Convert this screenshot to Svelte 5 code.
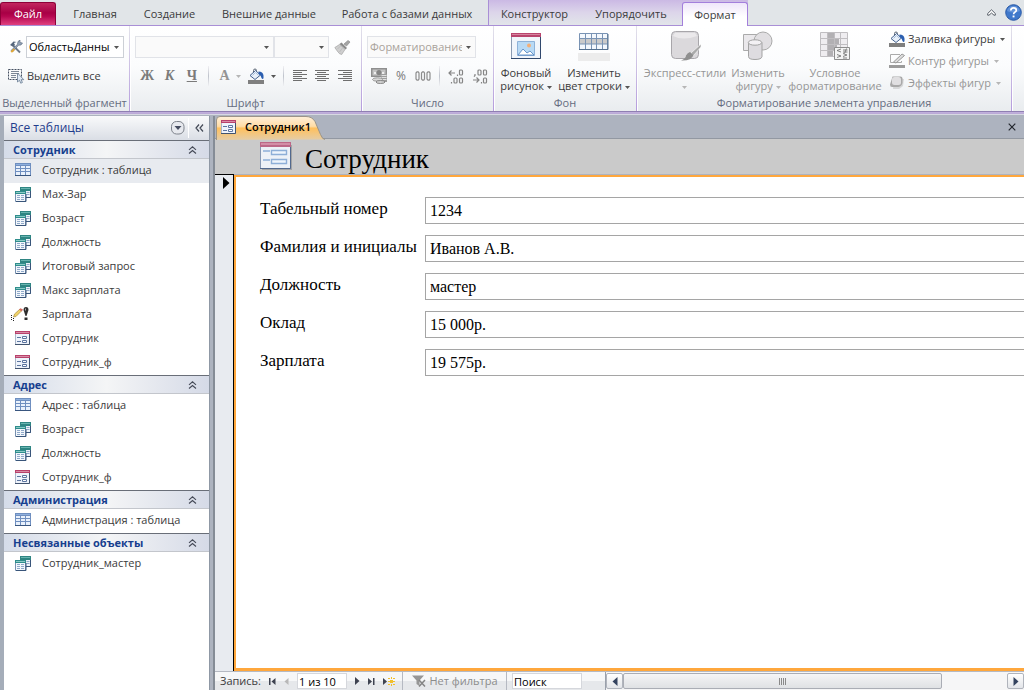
<script>
  const tabs = [
    { label: 'Главная', width: 70 },
    { label: 'Создание', width: 79 },
    { label: 'Внешние данные', width: 120 },
    { label: 'Работа с базами данных', width: 156 }
  ];
  const contextTabs = [
    { label: 'Конструктор', width: 91 },
    { label: 'Упорядочить', width: 102 },
    { label: 'Формат', width: 66, active: true }
  ];
  const navGroups = [
    {
      title: 'Сотрудник',
      items: [
        { icon: 'table', label: 'Сотрудник : таблица', selected: true },
        { icon: 'query', label: 'Мах-Зар' },
        { icon: 'query', label: 'Возраст' },
        { icon: 'query', label: 'Должность' },
        { icon: 'query', label: 'Итоговый запрос' },
        { icon: 'query', label: 'Макс зарплата' },
        { icon: 'update', label: 'Зарплата' },
        { icon: 'form', label: 'Сотрудник' },
        { icon: 'form', label: 'Сотрудник_ф' }
      ]
    },
    {
      title: 'Адрес',
      items: [
        { icon: 'table', label: 'Адрес : таблица' },
        { icon: 'query', label: 'Возраст' },
        { icon: 'query', label: 'Должность' },
        { icon: 'form', label: 'Сотрудник_ф' }
      ]
    },
    { title: 'Администрация', items: [{ icon: 'table', label: 'Администрация : таблица' }] },
    { title: 'Несвязанные объекты', items: [{ icon: 'query', label: 'Сотрудник_мастер' }] }
  ];
  const fields = [
    { id: 'number', label: 'Табельный номер', value: '1234' },
    { id: 'name', label: 'Фамилия и инициалы', value: 'Иванов А.В.' },
    { id: 'post', label: 'Должность', value: 'мастер' },
    { id: 'rate', label: 'Оклад', value: '15 000р.' },
    { id: 'salary', label: 'Зарплата', value: '19 575р.' }
  ];
  const aligns = [
    { name: 'По левому краю', x: [0, 0, 0] },
    { name: 'По центру', x: [2, 2, 2] },
    { name: 'По правому краю', x: [5, 5, 5] }
  ];
</script>

{#snippet arrow()}
  <svg class="arrow" width="5" height="3" viewBox="0 0 5 3" aria-hidden="true"><path d="M0 0h5L2.500 3z" fill="currentColor" /></svg>
{/snippet}

{#snippet bucket()}
  <svg width="17" height="16" viewBox="0 0 17 16" aria-hidden="true">
    <path d="M5.500 5V2.500q0-1.500 1.500-1.500t1.500 1.500V7" fill="none" stroke="#5b6675" />
    <path d="M2 7.500L7.500 2.500l5 4.500L7 11.500z" fill="#e8f0fa" stroke="#45628f" />
    <path d="M4.500 7.500l3-3 3 2.800" fill="none" stroke="#a9c0dd" />
    <path d="M10.500 3.500q4.500 0 5 4v2.800q-1 1.500-2-.3-.5-3-3-4z" fill="#2c5fb0" />
    <path d="M0 12h16v4H0z" fill="#7f7f7f" />
  </svg>
{/snippet}

{#snippet navIcon(kind)}
  {#if kind === 'table'}
    <svg width="16" height="14" viewBox="0 0 16 14" aria-hidden="true">
      <path d="M0 0h16v13H0z" fill="#6f8fc0" /><path d="M0 12h16v1H0z" fill="#39567f" />
      <path d="M1 1h14v1H1z" fill="#8fb0de" />
      <path d="M1 3h4v2H1zM6 3h4v2H6zM11 3h4v2h-4zM1 6h4v2H1zM6 6h4v2H6zM11 6h4v2h-4zM1 9h4v3H1zM6 9h4v3H6zM11 9h4v3h-4z" fill="#e9f1fc" />
    </svg>
  {:else if kind === 'query'}
    <svg width="16" height="15" viewBox="0 0 16 15" aria-hidden="true">
      <path d="M5.500.5h10v10h-10z" fill="#eef4fa" stroke="#4d6c93" /><path d="M5 0h11v4H5z" fill="#2f8583" /><path d="M6 1h9v1H6z" fill="#68b5b0" />
      <path d="M11.500 5.500h3m-3 2h3" stroke="#8fa9c9" />
      <path d="M.5 4.500h10v10H.5z" fill="#f3f7fc" stroke="#7790af" /><path d="M0 4h11v3H0z" fill="#2f8d8c" /><path d="M1 5h9v1H1z" fill="#8bcac5" />
      <path d="M2 8.500h3m1 0h3m-7 2h3m1 0h3m-7 2h3m1 0h3" stroke="#8fa9c9" /><path d="M1 14.500h10V7m0 3.500h4.500V4" fill="none" stroke="#39557a" />
    </svg>
  {:else if kind === 'update'}
    <svg class="wide" width="20" height="14" viewBox="0 0 20 14" aria-hidden="true">
      <path d="M0 8h1v1H0zm0 2h1v1H0zm0 2h1v1H0zm2-1h1v1H2zm0 2h1v1H2z" fill="#222" />
      <path d="M2.500 10l1-3L9 2l2 1.500L5 9.500z" fill="#f0d268" stroke="#9a8138" stroke-width=".6" />
      <path d="M8 2.500l1.500-1.300L12 2.500 10.500 4.500z" fill="#d56b61" />
      <path d="M12.500 3q0-3 2.500-3t2.500 3l-2 6h-1z" fill="#2d2d2d" /><path d="M14 1.500h1v2h-1z" fill="#aaa" /><path d="M13.500 10.500h3v2.500h-3z" fill="#2d2d2d" />
    </svg>
  {:else}
    <svg width="16" height="15" viewBox="0 0 16 15" aria-hidden="true">
      <path d="M.5.5h14v13H.5z" fill="#eef3fb" stroke="#a8b3c6" />
      <path d="M0 0h15v3H0z" fill="#b8416b" /><path d="M1 1h13v1H1z" fill="#d88ba6" />
      <path d="M0 13.500h14.500V3" fill="none" stroke="#41536f" />
      <path d="M2 6.500h4m-4 4h4" stroke="#5c75a0" /><path d="M7.500 5.500h4v2h-4zm0 4h4v2h-4z" fill="#fff" stroke="#5c75a0" />
    </svg>
  {/if}
{/snippet}

<div class="app">
  <nav class="tabs" aria-label="Лента">
    <button class="file">Файл</button>
    <div class="main-tabs">
      {#each tabs as tab}<button style="width: {tab.width}px">{tab.label}</button>{/each}
    </div>
    <div class="context">
      {#each contextTabs as tab}<button class:active={tab.active} style="width: {tab.width}px">{tab.label}</button>{/each}
    </div>
    <div class="tools">
      <button aria-label="Свернуть ленту"><svg width="9" height="7" viewBox="0 0 9 7"><path d="M.7 4.500L4.500.8l3.800 3.700v1.700H7L4.500 4 2 6.200H.7z" fill="#fff" stroke="#555c66" /></svg></button>
      <button aria-label="Справка"><svg width="17" height="17" viewBox="0 0 17 17"><circle cx="8.500" cy="8.500" r="7.800" fill="#3f78cb" stroke="#2c5ba6" /><path d="M2 7a6.700 6.500 0 0 1 13 0q-6 3-13 0z" fill="#7ba5e3" opacity=".6" /><path d="M5.800 6.500q0-2.700 2.800-2.700 2.700 0 2.700 2.400 0 1.300-1.500 2.100-1.200.7-1.200 2" fill="none" stroke="#fff" stroke-width="1.700" /><path d="M7.600 11.500h1.900v1.900H7.600z" fill="#fff" /></svg></button>
    </div>
  </nav>

  <div class="ribbon">
    <section class="group g-select">
      <div class="group-body">
        <div class="line">
          <svg width="14" height="14" viewBox="0 0 14 14" aria-hidden="true"><path d="M3 4.500l8 8" stroke="#6d7989" stroke-width="1.800" /><path d="M1 5l3.500-3.500 3 .5L5 3l1 2-2 1.500z" fill="#56677e" /><path d="M9 1.500L11 0v2.500l2.500.5-1.500 2-2.500.2L3.500 12 2 10.500 8.500 4.300z" fill="#96a5b8" stroke="#53637a" stroke-width=".6" /><path d="M1.500 11.500l3-3 1.500 1.300-3 3z" fill="#e4aa35" /></svg>
          <select class="object" aria-label="Объект"><option>ОбластьДанных</option></select>
        </div>
        <button class="line select-all">
          <svg width="17" height="16" viewBox="0 0 17 16" aria-hidden="true"><path d="M.5 1.500h13v10H.5z" fill="none" stroke="#444f60" stroke-dasharray="2 1" /><path d="M3 3.500h8m-8 2h8m-8 2h5m-5 2h5" stroke="#7c8796" /><path d="M9.500 5v9l2-1.800 1.200 3 1.700-.7-1.200-2.800h2.600z" fill="#dfe9f5" stroke="#66788f" stroke-width=".8" /></svg>
          Выделить все
        </button>
      </div>
      <h2>Выделенный фрагмент</h2>
    </section>

    <section class="group g-font">
      <div class="group-body">
        <div class="line">
          <select class="font-name" aria-label="Шрифт" disabled><option></option></select>
          <select class="font-size" aria-label="Размер шрифта" disabled><option></option></select>
          <button class="painter" aria-label="Формат по образцу" disabled><svg width="17" height="15" viewBox="0 0 17 15"><path d="M10 4L14 .5l2 1.500-3.500 4z" fill="#a5a5a5" stroke="#8c8c8c" stroke-width=".7" /><path d="M7.500 2.500l5.500 5.500-1.500 1.500L5.500 4z" fill="#8a8a8a" /><path d="M5.500 4.500l5.500 5-3.300 5-2.200-.8Q3 11 .8 7.500z" fill="#cfcfcf" stroke="#9a9a9a" stroke-width=".6" /><path d="M3.500 9l3-3m-1 6L8.500 8" stroke="#bdbdbd" /></svg></button>
        </div>
        <div class="line format">
          <button class="letter" aria-label="Полужирный">Ж</button>
          <button class="letter" aria-label="Курсив"><i>К</i></button>
          <button class="letter" aria-label="Подчеркнутый"><u>Ч</u></button>
          <span class="sep"></span>
          <button class="letter with-arrow faint" aria-label="Цвет текста">А{@render arrow()}</button>
          <button class="with-arrow" aria-label="Цвет фона">{@render bucket()}{@render arrow()}</button>
          <span class="sep"></span>
          {#each aligns as a}
            <button class="align" aria-label={a.name}><svg width="14" height="12" viewBox="0 0 14 12"><path d="M0 .5h14M0 4.500h14M0 8.500h14" stroke="#6f6f6f" /><path d="M{a.x[0]} 2.500h9M{a.x[1]} 6.500h9M{a.x[2]} 10.500h9" stroke="#6f6f6f" /></svg></button>
          {/each}
        </div>
      </div>
      <h2>Шрифт</h2>
    </section>

    <section class="group g-number">
      <div class="group-body">
        <div class="line"><select class="number-format" aria-label="Формат числа" disabled><option>Форматирование</option></select></div>
        <div class="line numbers">
          <button aria-label="Денежный формат" disabled><svg width="16" height="16" viewBox="0 0 16 16"><path d="M0 0h16v9H0z" fill="#8f8f8f" /><path d="M1.500 1.500h13v6h-13z" fill="#c4c4c4" /><path d="M3 4h2v2H3zm8 0h2v2h-2z" fill="#eee" /><circle cx="8" cy="4.500" r="2.600" fill="#858585" /><path d="M10 6h6v8h-6z" fill="#9d9d9d" /><path d="M10.500 7.500h5m-5 2h5m-5 2h5" stroke="#e0e0e0" /><ellipse cx="6.500" cy="11.500" rx="5" ry="1.700" fill="#d9d9d9" stroke="#999" /><ellipse cx="9.500" cy="14" rx="4.500" ry="1.500" fill="#d0d0d0" stroke="#888" /></svg></button>
          <button class="percent" aria-label="Процентный формат" disabled>%</button>
          <button class="zeros" aria-label="Формат с разделителями" disabled><svg width="16" height="10" viewBox="0 0 16 10"><path d="M1 2l1-1.200h1.200L4 2v6L3.200 9.200H2L1 8zM6.500 2l1-1.200h1.200L9.500 2v6l-.8 1.200H7.500L6.500 8zM12 2l1-1.200h1.200L15 2v6l-.8 1.200H13L12 8z" fill="none" stroke="#8d8d8d" stroke-width="1.200" /></svg></button>
          <span class="sep"></span>
          {#each [0, 1] as n}
            <button aria-label={n ? 'Уменьшить разрядность' : 'Увеличить разрядность'} disabled><svg width="16" height="15" viewBox="0 0 16 15"><g fill="none" stroke="#858585" stroke-width="1.200">
              {#if n}<path d="M3 5v1.500l-1 1.200" /><rect x="6" y="1" width="3" height="5" rx="1" /><rect x="11.500" y="1" width="3" height="5" rx="1" /><path d="M1 11h6M4.500 8.500L7 11l-2.500 2.500M9.500 13v1.500" /><rect x="11.500" y="9" width="3" height="5" rx="1" />
              {:else}<path d="M7 4H1m2.500-2.500L1 4l2.500 2.500M9.500 5.500v1.500" /><rect x="11.500" y="1" width="3" height="5" rx="1" /><path d="M3.500 13v1.500" /><rect x="6" y="9" width="3" height="5" rx="1" /><rect x="11.500" y="9" width="3" height="5" rx="1" />{/if}
            </g></svg></button>
          {/each}
        </div>
      </div>
      <h2>Число</h2>
    </section>

    <section class="group g-back">
      <div class="group-body bigs">
        <button class="big">
          <svg width="32" height="30" viewBox="0 0 32 30" aria-hidden="true"><path d="M1.500 2.500h29v25h-29z" fill="#f1f5fb" stroke="#8b9bb3" /><path d="M1 2h30v4H1z" fill="#b8446d" /><path d="M2 3h28v1H2z" fill="#d5849f" /><path d="M1 27.500h29.500V6" fill="none" stroke="#30486d" /><path d="M7.500 10.500h17v14h-17z" fill="#b9daf5" stroke="#8eb2d9" /><circle cx="19" cy="14.500" r="2" fill="#f4af77" /><path d="M8 24l5-6 4 4 3-2 4 4z" fill="#fff" stroke="#5b8bc4" stroke-width=".9" /></svg>
          <span>Фоновый<br />рисунок {@render arrow()}</span>
        </button>
        <button class="big">
          <svg width="32" height="30" viewBox="0 0 32 30" aria-hidden="true"><path d="M1.500 2.500h28v16h-28z" fill="#f4f8fd" /><path d="M2 8h28v5H2z" fill="#cacaca" /><path d="M1.500 2.500h28v16h-28zM7.500 3v15m6-15v15m5-15v15m6-15v15M2 7.500h28M2 13h28" fill="none" stroke="#7993b4" /><path d="M1 18.500h29V3" fill="none" stroke="#54708f" /><path d="M0 22h32v8H0z" fill="#ececec" /></svg>
          <span>Изменить<br />цвет строки {@render arrow()}</span>
        </button>
      </div>
      <h2>Фон</h2>
    </section>

    <section class="group g-control">
      <div class="group-body bigs">
        <button class="big styles" disabled>
          <svg width="32" height="30" viewBox="0 0 32 30" aria-hidden="true"><rect x="2.500" y=".5" width="27" height="27" rx="4" fill="#dbd9dc" stroke="#a8a6aa" /><path d="M4 5q10 5 24 0l-2-3H6z" fill="#ebe9eb" /><path d="M32 13l-10 9 2 3 8-9z" fill="#aaa" stroke="#fff" stroke-width=".6" /><path d="M21 21l3.500 3q-2 6-12.500 5.500 5-2 5-5 1.500-3 4-3.500z" fill="#8f8f8f" /></svg>
          <span>Экспресс-стили<br />{@render arrow()}</span>
        </button>
        <button class="big shape" disabled>
          <svg width="32" height="30" viewBox="0 0 32 30" aria-hidden="true"><path d="M1.500 3.500h17v16h-17z" fill="#eae8eb" stroke="#aaa" /><circle cx="21" cy="10" r="9" fill="#e1dfe2" stroke="#aaa" /><path d="M6.500 11.500v14q0 3 6.500 3t7-3v-14z" fill="#dedce0" stroke="#a3a3a3" /><ellipse cx="13" cy="11.500" rx="6.700" ry="2.700" fill="#f3f1f4" stroke="#a3a3a3" /></svg>
          <span>Изменить<br />фигуру {@render arrow()}</span>
        </button>
        <button class="big cond" disabled>
          <svg width="32" height="30" viewBox="0 0 32 30" aria-hidden="true"><path d="M1.500 1.500h27v24h-27z" fill="#efedf0" /><path d="M8 1h7v6h5v6h-2v6h-4v6H8z" fill="#b2b0b3" /><path d="M1.500 1.500h27v24h-27zM8.500 1v24m7-24v24m6-24v24M1 7.500h27M1 13.500h27M1 19.500h27" fill="none" stroke="#c0bec1" /><path d="M15.500 16.500h15v12h-15z" fill="#f4f4f4" stroke="#8d8d8d" /><path d="M22 18l-4 1.500 4 1.500m2-2h4.500m-4.500 2h4.500m-1-3.500l-2 5M18 23.500l4 1.500-4 1.500m6-4l4 1.500-4 1.500m0 1.500h4" fill="none" stroke="#777" stroke-width=".9" /></svg>
          <span>Условное<br />форматирование</span>
        </button>
        <div class="shape-list">
          <button>{@render bucket()}<span>Заливка фигуры</span>{@render arrow()}</button>
          <button disabled><svg width="17" height="16" viewBox="0 0 17 16" aria-hidden="true"><path d="M11 1.500H1.500v8h11V8" fill="none" stroke="#aaa" /><path d="M4.500 9L13 1l2.500 1.500L7 10z" fill="#ddd" stroke="#999" /><path d="M0 12h16v3H0z" fill="#9b9b9b" /></svg><span>Контур фигуры</span>{@render arrow()}</button>
          <button disabled><svg width="17" height="16" viewBox="0 0 17 16" aria-hidden="true"><path d="M5 4h10l-1 7-4 3H4z" fill="#bbb" opacity=".5" /><path d="M3.500 1.500h8q2 0 2 2V8q-1 3.500-4 4H3Q1 12 1 9.500z" fill="#a9a9a9" /><rect x="3" y="2" width="9" height="8" rx="2.500" fill="#e0dfe1" /></svg><span>Эффекты фигур</span>{@render arrow()}</button>
        </div>
      </div>
      <h2>Форматирование элемента управления</h2>
    </section>
  </div>

  <div class="workspace">
    <aside>
      <header>
        <h1>Все таблицы</h1>
        <button class="round" aria-label="Выбор категории"><svg width="14" height="14" viewBox="0 0 14 14"><rect x=".5" y=".5" width="12.500" height="12.500" rx="5" fill="#e7e9ee" stroke="#7d828b" /><path d="M3.500 5h7L7 9z" fill="#454c60" /></svg></button>
        <button class="collapse" aria-label="Свернуть область"><svg width="9" height="8" viewBox="0 0 9 8"><path d="M4 .5L1 4l3 3.500M8 .5L5 4l3 3.500" fill="none" stroke="#434956" stroke-width="1.200" /></svg></button>
      </header>
      {#each navGroups as group}
        <section>
          <button class="nav-title">{group.title}<svg width="9" height="8" viewBox="0 0 9 8" aria-hidden="true"><path d="M1 3.800L4.500.8 8 3.800M1 7.500l3.500-3L8 7.500" fill="none" stroke="#454a57" stroke-width="1.100" /></svg></button>
          {#each group.items as item}
            <button class="nav-item" class:selected={item.selected}><span class="nav-icon">{@render navIcon(item.icon)}</span>{item.label}</button>
          {/each}
        </section>
      {/each}
    </aside>

    <main>
      <div class="doc-tabs">
        <button class="doc-tab">
          <svg class="tab-shape" width="109" height="24" viewBox="0 0 109 24" aria-hidden="true"><defs><linearGradient id="tabFill" x2="0" y2="1"><stop stop-color="#fff0d9" /><stop offset=".42" stop-color="#ffdca6" /><stop offset=".5" stop-color="#ffc05d" /><stop offset="1" stop-color="#e5cda6" /></linearGradient></defs><path d="M.5 24V4Q.5.5 4 .5h86q6 0 9 5l5.500 13q2 5 4.500 5" fill="url(#tabFill)" stroke="#9b9488" /></svg>
          <span>{@render navIcon('form')}Сотрудник1</span>
        </button>
        <button class="close" aria-label="Закрыть"><svg width="8" height="8" viewBox="0 0 8 8"><path d="M.7.7l6.600 6.600m0-6.600L.7 7.300" stroke="#23272e" stroke-width="1.200" /></svg></button>
      </div>
      <div class="form-head">
        <svg width="33" height="29" viewBox="0 0 33 29" aria-hidden="true"><path d="M2 3h30v25H2z" fill="#8b8b8b" opacity=".6" /><path d="M.5.5h30v26H.5z" fill="#edf1f7" stroke="#8798b2" /><path d="M0 0h31v5H0z" fill="#bd6787" /><path d="M1 1h29v2H1z" fill="#d28ea6" /><path d="M0 26.500h30.500V5" fill="none" stroke="#52698e" /><path d="M3 9h7m-7 9h7" stroke="#a5bfe0" stroke-width="2" /><path d="M11.500 8.500h15v4h-15zm0 9h15v4h-15z" fill="#eef4fc" stroke="#8daed7" stroke-width="1.400" /></svg>
        <h1>Сотрудник</h1>
      </div>
      <div class="record">
        <div class="selector"><svg width="7" height="12" viewBox="0 0 7 12" aria-hidden="true"><path d="M0 0l6.500 6L0 12z" /></svg></div>
        <form>
          {#each fields as f}
            <label for={f.id}>{f.label}</label>
            <input id={f.id} value={f.value} />
          {/each}
        </form>
      </div>
      <footer>
        <div class="records">
          <label for="record">Запись:</label>
          <button aria-label="Первая запись"><svg width="7" height="7" viewBox="0 0 7 7"><path d="M0 0h1.500v7H0zM6.500 0v7L2.500 3.500z" /></svg></button>
          <button class="prev" aria-label="Предыдущая запись" disabled><svg width="5" height="7" viewBox="0 0 5 7"><path d="M4.500 0v7L.5 3.500z" /></svg></button>
          <input id="record" value="1 из 10" />
          <button aria-label="Следующая запись"><svg width="5" height="8" viewBox="0 0 5 8"><path d="M0 0v8l4.500-4z" /></svg></button>
          <button class="last" aria-label="Последняя запись"><svg width="7" height="7" viewBox="0 0 7 7"><path d="M5 0h1.500v7H5zM0 0v7l4-3.500z" /></svg></button>
          <button aria-label="Новая запись"><svg width="13" height="9" viewBox="0 0 13 9"><path d="M0 1v7l4-3.500z" /><path d="M5 1h2v1H5zm3-1h1v2H8zm2 1h2v1h-2zM5 4h2v1H5zm5 0h2v1h-2zM5 7h2v1H5zm3 0h1v2H8zm2 0h2v1h-2zM7 3h3v3H7z" fill="#f1bf2c" /></svg></button>
        </div>
        <button class="filter" disabled><svg width="14" height="12" viewBox="0 0 14 12" aria-hidden="true"><path d="M0 .5h12L7.500 5.500V11l-3-2V5.500z" fill="#969696" /><path d="M7 5l6 6.500m0-6.500l-6 6.500" stroke="#858585" stroke-width="1.500" /></svg>Нет фильтра</button>
        <div class="search"><input aria-label="Поиск" value="Поиск" /></div>
        <div class="scroll">
          <button aria-label="Влево"><svg width="6" height="9" viewBox="0 0 6 9"><path d="M5.500 0v9L.5 4.500z" fill="#34435f" /></svg></button>
          <div class="track"><div class="thumb"><i></i><i></i><i></i><i></i></div></div>
          <button aria-label="Вправо"><svg width="6" height="9" viewBox="0 0 6 9"><path d="M.5 0v9l5-4.500z" fill="#34435f" /></svg></button>
        </div>
      </footer>
    </main>
  </div>
</div>

<style>
  :global(body) { margin: 0; }
  .app { display: flex; flex-direction: column; min-height: 100vh; overflow: hidden; background: #adb3bf; color: #3b3b3b; font: 11px/14px "Open Sans", "Noto Sans", sans-serif; }
  .app * { box-sizing: border-box; }
  button, input, select { font: inherit; color: inherit; margin: 0; }
  button { display: flex; align-items: center; justify-content: center; padding: 0; border: 0; background: none; white-space: nowrap; }
  h1, h2 { margin: 0; font-weight: normal; }
  svg { display: block; flex: none; }

  .tabs { display: flex; height: 26px; background: #e1e5e8; border-bottom: 1px solid #a98fd6; }
  .file { width: 56px; margin-top: 2px; border: 1px solid #8d0038; border-bottom: 0; border-radius: 3px 3px 0 0; color: #fff; background: linear-gradient(#c1265e, #a80045 45%, #b5064f 60%, #e0407e); }
  .main-tabs { display: flex; padding: 2px 3px 0 4px; }
  .context { display: flex; height: 26px; border-left: 1px solid #a98fd6; background: linear-gradient(#cbb9e4, #dcd5ea 50%, #e2e5e9); border-bottom: 1px solid #a98fd6; }
  .context button { height: 24px; margin-top: 2px; }
  .context .active { border: 1px solid #a37fdc; border-bottom: 0; border-radius: 3px 3px 0 0; background: linear-gradient(#efe6fa, #fff 60%); }
  .tools { display: flex; flex: 1; align-items: center; justify-content: flex-end; gap: 9px; padding-right: 2px; }

  .ribbon { display: flex; height: 89px; background: linear-gradient(#fff, #fbfcfd 45%, #e9ecef 85px, #8f7fb2 85px, #8f7fb2 86px, #c2b0dd 86px, #b9a8d5 88px, #d7d9e2 88px); padding-bottom: 4px; }
  .group { display: flex; flex-direction: column; flex: none; border-right: 1px solid; border-image: linear-gradient(#e3e3ea, #b49bdd) 1; box-shadow: 1px 0 #fff; }
  .group h2 { height: 16px; font-size: 11px; line-height: 15px; text-align: center; color: #656c80; white-space: nowrap; }
  .group-body { flex: 1; display: flex; flex-direction: column; gap: 7px; padding: 10px 5px 0; }
  .line { display: flex; align-items: center; height: 22px; }
  .g-select { width: 130px; }
  .g-font { width: 232px; }
  .g-number { width: 132px; }
  .g-back { width: 143px; }
  .g-control { width: 375px; }
  select { appearance: none; height: 22px; padding: 0 13px 0 2px; border: 1px solid #ccd0d6; border-radius: 0; overflow: hidden; background: #fff url("data:image/svg+xml,%3Csvg xmlns='http://www.w3.org/2000/svg' width='5' height='3'%3E%3Cpath d='M0 0h5L2.500 3z' fill='%23555'/%3E%3C/svg%3E") no-repeat right 4px center; color: #000; }
  select:disabled { opacity: 1; background-color: #fafafa; border-color: #e1e3e8; color: #a9a29a; }
  .g-select .line { gap: 3px; padding-left: 4px; }
  .object { width: 98px; }
  .group .select-all { justify-content: flex-start; gap: 2px; padding-left: 3px; }
  .font-name { width: 139px; }
  .font-size { width: 55px; }
  .painter { padding-left: 5px; }
  .letter { width: 23px; font: bold 14px/18px "Liberation Serif", serif; color: #7b7b7b; }
  .format { padding-left: 1px; }
  .sep { width: 1px; height: 20px; margin: 0 5px; background: linear-gradient(#f0f0f3, #bfc3cc, #f0f0f3); }
  .with-arrow { width: 33px; gap: 6px; }
  .faint { color: #949494; }
  .faint .arrow { color: #b5b5b5; }
  .align { width: 23px; }
  .arrow { display: inline-block; vertical-align: middle; color: #555; }
  button:disabled .arrow { color: #b6b6b6; }
  .number-format { width: 109px; }
  .numbers { gap: 8px; padding-left: 4px; }
  .numbers .sep { margin: 0; }
  .percent { width: 14px; font-size: 12px; color: #777; }
  .group .bigs { flex-direction: row; gap: 0; padding: 5px 0 0; align-items: flex-start; }
  .big { flex-direction: column; width: 64px; gap: 5px; line-height: 13px; }
  .big + .big { width: 72px; }
  .big:disabled, .shape-list button:disabled { color: #969696; }
  .styles { width: 96px; }
  .big.cond { width: 104px; }
  .big.shape { width: 50px; }
  .shape-list { display: flex; flex-direction: column; align-items: flex-start; margin: -3px auto 0 2px; }
  .shape-list button { height: 22px; gap: 2px; }
  .shape-list span { margin-right: 3px; }

  .workspace { display: flex; flex: 1; }
  aside { width: 210px; flex: none; margin-top: 1px; border: solid #8f98a5; border-width: 0 1px 0 4px; border-left-color: #a5adb9; background: #fff; }
  aside header { display: flex; align-items: center; height: 24px; padding: 0 5px 0 6px; background: linear-gradient(#f9fafb, #dadee5); color: #1e3c8c; }
  aside h1 { flex: 1; font-size: 12px; }
  .collapse { height: 20px; margin-left: 3px; padding-left: 6px; border-left: 1px solid #fff; }
  .nav-title { width: 100%; height: 19px; justify-content: space-between; padding: 0 12px 0 9px; border-top: 1px solid #696e78; border-bottom: 1px solid #c3c6cc; background: linear-gradient(90deg, #d5dce9, #f4f5f6 50%, #d5dae7); color: #173f8f; font-weight: bold; }
  .nav-item { width: 100%; height: 24px; justify-content: flex-start; padding: 0 0 2px 11px; }
  .nav-item.selected { background: #e8ebf0; }
  .nav-icon { width: 27px; }
  .wide { margin-left: -4px; }

  main { flex: 1; min-width: 0; display: flex; flex-direction: column; margin: 1px 0 0 3px; border-left: 2px solid #858c96; }
  .doc-tabs { display: flex; justify-content: space-between; height: 23px; padding: 0 8px 0 1px; border-bottom: 1px solid #9298a2; }
  .doc-tab { position: relative; width: 109px; justify-content: flex-start; padding-left: 5px; color: #000; font-weight: 600; }
  .doc-tab span { position: relative; display: flex; align-items: center; gap: 8px; }
  .tab-shape { position: absolute; left: 0; top: 0; }
  .form-head { display: flex; align-items: center; gap: 12px; height: 35px; padding-left: 45px; background: #cacaca; color: #000; font: 27px/30px "Liberation Serif", serif; }
  .form-head h1 { padding-top: 4px; font-size: 27px; }
  .record { display: flex; flex: 1; min-height: 0; }
  .selector { width: 19px; padding: 2px 0 0 8px; border: solid #000; border-width: 1px 1px 0 0; background: #e8ebf0; }
  form { flex: 1; display: grid; grid-template-columns: 165px 1fr; grid-auto-rows: 27px; row-gap: 11px; align-content: start; padding: 20px 0 0 24px; margin-top: 1px; border: solid #ffa73c; border-width: 2px 0 3px 2px; background: #fff; color: #000; font: 16px/20px "Liberation Serif", serif; }
  form label { padding-top: 2px; font-size: 17px; white-space: nowrap; }
  form input { min-width: 0; width: 100%; padding: 0 4px; border: 1px solid #a5a5a5; border-right: 0; border-radius: 0; background: #fff; }
  footer { display: flex; align-items: stretch; height: 19px; border-top: 1px solid #b5b9c2; background: linear-gradient(#f6f7f8 50%, #e6e8eb 50%); }
  footer input { height: 16px; padding: 0 1px; border: 1px solid #d5d7dc; border-radius: 0; background: #fff; color: #000; }
  .records { display: flex; align-items: center; gap: 8px; width: 188px; padding-left: 5px; border-right: 1px solid #b5b9c2; }
  .records button { fill: #3e4250; }
  .records button:disabled { fill: #b8b8b8; }
  .records input { width: 50px; }
  .filter { gap: 4px; width: 104px; color: #8c8c8c; border-right: 1px solid #b5b9c2; }
  .search { display: flex; align-items: center; width: 99px; padding-left: 5px; border-right: 1px solid #9aa0ab; }
  .search input { width: 70px; }
  .scroll { display: flex; flex: 1; align-items: center; background: #f6f6f7; }
  .scroll button { width: 17px; height: 16px; border: 1px solid #b0b4bc; border-radius: 2px; background: linear-gradient(#fff, #e3e5e9); }
  .track { flex: 1; }
  .thumb { display: flex; justify-content: center; align-items: center; gap: 1px; width: 83%; height: 16px; border: 1px solid #aaadb5; border-radius: 2px; background: linear-gradient(#f5f5f6, #dfe1e4); }
  .thumb i { width: 1px; height: 7px; background: #8a8a8a; }
</style>
